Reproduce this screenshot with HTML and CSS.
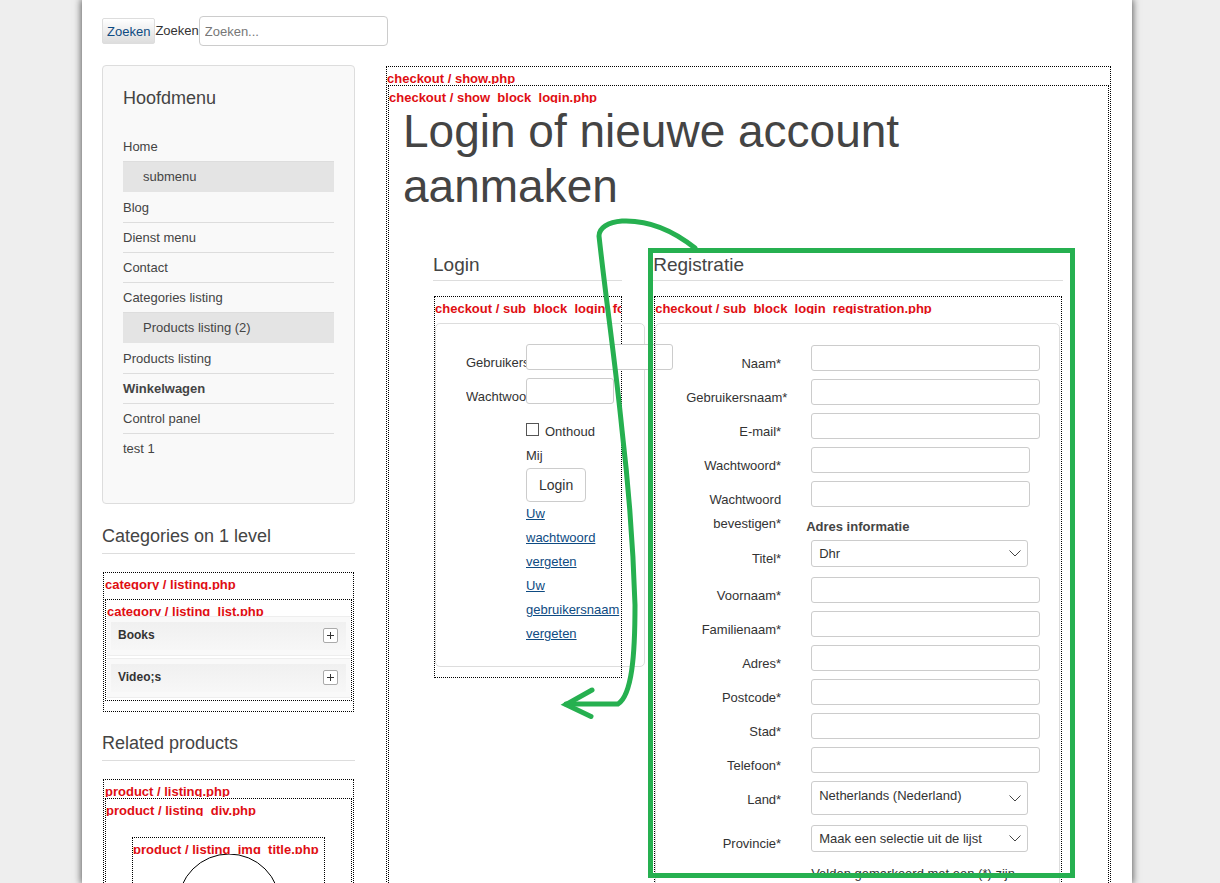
FILE: index.html
```
<!DOCTYPE html>
<html lang="nl">
<head>
  <meta charset="UTF-8">
  <meta name="viewport" content="width=device-width, initial-scale=1.0">
  <title>Login of nieuwe account aanmaken</title>
  <link rel="stylesheet" href="styles.css">
</head>
<body>
  <div class="page">
    <form class="search">
      <button type="button" class="search-button">Zoeken</button>
      <label for="search">Zoeken</label>
      <input type="text" id="search" class="search-input" placeholder="Zoeken...">
    </form>

    <div class="columns">
      <aside class="sidebar">
        <nav class="menu">
          <h3>Hoofdmenu</h3>
          <ul>
            <li class="no-line"><a href="#">Home</a></li>
            <li class="sub"><a href="#">submenu</a></li>
            <li class="no-line"><a href="#">Blog</a></li>
            <li><a href="#">Dienst menu</a></li>
            <li><a href="#">Contact</a></li>
            <li><a href="#">Categories listing</a></li>
            <li class="sub"><a href="#">Products listing (2)</a></li>
            <li class="no-line"><a href="#">Products listing</a></li>
            <li class="active"><a href="#">Winkelwagen</a></li>
            <li><a href="#">Control panel</a></li>
            <li><a href="#">test 1</a></li>
          </ul>
        </nav>

        <section class="module">
          <h3 class="module-title">Categories on 1 level</h3>
          <div class="tpl tpl-categories">
            <div class="tpl-name">category / listing.php</div>
            <div class="tpl tpl-list">
              <div class="tpl-name">category / listing_list.php</div>
              <ul class="categories">
                <li>
                  <div class="category">
                    <span>Books</span>
                    <button type="button" class="expand" aria-label="Books">
                      <svg viewBox="0 0 15 15"><path d="M4 7.5h7M7.5 4v7"/></svg>
                    </button>
                  </div>
                </li>
                <li>
                  <div class="category">
                    <span>Video;s</span>
                    <button type="button" class="expand" aria-label="Video;s">
                      <svg viewBox="0 0 15 15"><path d="M4 7.5h7M7.5 4v7"/></svg>
                    </button>
                  </div>
                </li>
              </ul>
            </div>
          </div>
        </section>

        <section class="module">
          <h3 class="module-title">Related products</h3>
          <div class="tpl tpl-products">
            <div class="tpl-name">product / listing.php</div>
            <div class="tpl tpl-div">
              <div class="tpl-name">product / listing_div.php</div>
              <div class="tpl tpl-product">
                <div class="tpl-name">product / listing_img_title.php</div>
                <svg class="product-img" viewBox="0 0 104 104"><circle cx="52" cy="51" r="51"/></svg>
              </div>
            </div>
          </div>
        </section>
      </aside>

      <main class="tpl main">
        <div class="tpl-name">checkout / show.php</div>
        <div class="tpl">
          <div class="tpl-name">checkout / show_block_login.php</div>
          <div class="checkout">
            <h1>Login of nieuwe account aanmaken</h1>
            <div class="blocks">
              <section>
                <h2>Login</h2>
                <div class="tpl tpl-form tpl-login">
                  <div class="tpl-name">checkout / sub_block_login_form.php</div>
                  <form class="panel login">
                    <div class="field">
                      <label for="login-user">Gebruikersnaam</label>
                      <div class="control"><input type="text" id="login-user" class="login-user"></div>
                    </div>
                    <div class="field">
                      <label for="login-pass">Wachtwoord</label>
                      <div class="control"><input type="password" id="login-pass"></div>
                    </div>
                    <div class="actions">
                      <div class="remember">
                        <input type="checkbox" id="remember"><label for="remember">Onthoud Mij</label>
                      </div>
                      <button type="button" class="login-button">Login</button>
                      <a href="#">Uw wachtwoord vergeten</a>
                      <a href="#">Uw gebruikersnaam vergeten</a>
                    </div>
                  </form>
                </div>
              </section>

              <section>
                <h2>Registratie</h2>
                <div class="tpl tpl-form tpl-registration">
                  <div class="tpl-name">checkout / sub_block_login_registration.php</div>
                  <form class="panel registration">
                    <div class="field">
                      <label for="name">Naam*</label>
                      <div class="control"><input type="text" id="name"></div>
                    </div>
                    <div class="field">
                      <label for="username">Gebruikersnaam*</label>
                      <div class="control"><input type="text" id="username"></div>
                    </div>
                    <div class="field">
                      <label for="email">E-mail*</label>
                      <div class="control"><input type="email" id="email"></div>
                    </div>
                    <div class="field">
                      <label for="password">Wachtwoord*</label>
                      <div class="control"><input type="password" id="password"></div>
                    </div>
                    <div class="field">
                      <label for="password2">Wachtwoord bevestigen*</label>
                      <div class="control">
                        <input type="password" id="password2">
                        <h4>Adres informatie</h4>
                      </div>
                    </div>
                    <div class="field">
                      <label for="title">Titel*</label>
                      <div class="control"><select id="title"><option>Dhr</option></select></div>
                    </div>
                    <div class="field">
                      <label for="firstname">Voornaam*</label>
                      <div class="control"><input type="text" id="firstname"></div>
                    </div>
                    <div class="field">
                      <label for="lastname">Familienaam*</label>
                      <div class="control"><input type="text" id="lastname"></div>
                    </div>
                    <div class="field">
                      <label for="street">Adres*</label>
                      <div class="control"><input type="text" id="street"></div>
                    </div>
                    <div class="field">
                      <label for="postcode">Postcode*</label>
                      <div class="control"><input type="text" id="postcode"></div>
                    </div>
                    <div class="field">
                      <label for="city">Stad*</label>
                      <div class="control"><input type="text" id="city"></div>
                    </div>
                    <div class="field">
                      <label for="phone">Telefoon*</label>
                      <div class="control"><input type="tel" id="phone"></div>
                    </div>
                    <div class="field">
                      <label for="country">Land*</label>
                      <div class="control"><select id="country" class="tall"><option>Netherlands (Nederland)</option></select></div>
                    </div>
                    <div class="field">
                      <label for="state">Provincie*</label>
                      <div class="control">
                        <select id="state"><option>Maak een selectie uit de lijst</option></select>
                        <p>Velden gemarkeerd met een (*) zijn</p>
                      </div>
                    </div>
                  </form>
                </div>
              </section>
            </div>
          </div>
        </div>
      </main>
    </div>

    <!-- Hand-drawn markup: move the registration block below the login block -->
    <svg class="markup" viewBox="0 0 1050 883">
      <rect x="568.5" y="250.5" width="422" height="625"/>
      <path d="M613 248C588 228 562 220 540 221C526 222 517 228 517 236C524 300 533 360 540 430C547 490 551 540 553 605C553 655 550 695 536 704H484"/>
      <path d="M510 690L484 704.500L509 716.500"/>
    </svg>
  </div>
</body>
</html>
```

FILE: styles.css
```
:root {
  --text: #333;
  --heading: #444;
  --line: #ddd;
  --field: #ccc;
  --link: #0e4b82;
  --tpl: #e00d12;
  --markup: #26b050;
}

* {
  box-sizing: border-box;
  margin: 0;
  padding: 0;
}

body {
  background: #eee;
  color: var(--text);
  font-family: "Liberation Sans", Arial, sans-serif;
  font-size: 13px;
  line-height: 24px;
  padding-right: 6px;
  overflow: hidden;
}

.page {
  position: relative;
  max-width: 1050px;
  height: 100vh;
  margin: 0 auto;
  padding: 16px 20px 0;
  overflow: hidden;
  background: #fff;
  box-shadow: 0 0 7px 1px rgba(0, 0, 0, 0.6);
}

ul {
  list-style: none;
}

a {
  color: var(--link);
}

h1, h2, h3 {
  color: var(--heading);
  font-weight: normal;
}

input, select, button {
  font-family: inherit;
  font-size: 13px;
  color: var(--text);
}

/* Search */

.search {
  display: flex;
  align-items: center;
  margin-bottom: 19px;
}

.search-button {
  height: 26px;
  padding: 0 4px;
  border: 1px solid var(--line);
  border-radius: 2px;
  background: linear-gradient(#fff, #ddd);
  color: var(--link);
}

.search-input {
  width: 189px;
  height: 30px;
  padding: 0 5px;
  border: 1px solid var(--field);
  border-radius: 4px;
}

.search-input::placeholder {
  color: #777;
}

/* Layout */

.columns {
  display: flex;
  gap: 31px;
}

.sidebar {
  flex: none;
  width: 253px;
}

.main {
  flex: 1;
  min-width: 0;
  margin: 1px 1px 0 0;
}

/* Template outlines */

.tpl {
  border: 1px dotted #000;
}

.tpl-name {
  height: 17px;
  margin-bottom: 1px;
  overflow: hidden;
  white-space: nowrap;
  color: var(--tpl);
  font-weight: bold;
}

.main > .tpl {
  margin: 0 1px;
}

/* Main menu */

.menu {
  padding: 20px 20px 40px;
  margin-bottom: 20px;
  border: 1px solid var(--line);
  border-radius: 4px;
  background: #f9f9f9;
}

.menu h3 {
  margin-bottom: 21px;
  font-size: 18px;
}

.menu li {
  border-top: 1px solid var(--line);
  line-height: 29px;
}

.menu .no-line {
  border-color: transparent;
}

.menu .sub {
  padding-left: 20px;
  background: #e4e4e4;
  line-height: 30px;
}

.menu .active {
  font-weight: bold;
}

.menu a {
  display: block;
  color: var(--heading);
  text-decoration: none;
}

/* Sidebar modules */

.module {
  margin-bottom: 19px;
}

.module-title {
  padding-bottom: 5px;
  margin-bottom: 18px;
  border-bottom: 1px solid var(--line);
  font-size: 18px;
}

.module > .tpl {
  margin: 0 1px;
}

.tpl-categories {
  padding: 0 1px 10px;
}

.tpl-categories > .tpl-name {
  margin-bottom: 9px;
}

.tpl-list {
  padding: 0 1px 2px;
}

.tpl-list > .tpl-name {
  height: 16px;
  margin-bottom: 0;
}

.categories li {
  padding: 5px 4px;
  border: 1px solid #eee;
  border-width: 1px 0;
  background: #f9f9f9;
}

.categories li + li {
  margin-top: 2px;
}

.category {
  display: flex;
  align-items: center;
  justify-content: space-between;
  height: 28px;
  padding: 0 8px 2px 7px;
  background: linear-gradient(#f0f0f0, #f7f7f7);
  font-size: 12px;
  font-weight: bold;
}

.expand {
  width: 15px;
  height: 15px;
  border: 1px solid #aaa;
  border-radius: 2px;
  background: #fff;
}

.expand svg {
  display: block;
  width: 15px;
  height: 15px;
  margin: -1px;
  stroke: #333;
}

.tpl-products {
  padding: 0 1px;
}

.tpl-div > .tpl-name {
  margin-bottom: 21px;
}

.tpl-product {
  margin: 0 26px;
}

.tpl-product > .tpl-name {
  height: 16px;
  margin-bottom: 0;
}

.product-img {
  display: block;
  width: 104px;
  height: 104px;
  margin: 0 auto;
  fill: #fff;
  stroke: #000;
}

/* Checkout */

.checkout {
  padding: 0 45px 60px 14px;
}

h1 {
  margin-bottom: 39px;
  font-size: 46px;
  line-height: 55px;
}

.blocks {
  display: grid;
  grid-template-columns: 6fr 13fr;
  align-items: start;
  gap: 31px;
  padding-left: 30px;
}

.blocks > section {
  min-width: 0;
}

h2 {
  padding-bottom: 3px;
  margin-bottom: 15px;
  border-bottom: 1px solid var(--line);
  font-size: 19px;
}

.tpl-form {
  margin: 0 1px;
}

.tpl-form > .tpl-name {
  margin-bottom: 9px;
}

.tpl-login {
  margin-right: 0;
  padding-bottom: 10px;
}

.tpl-registration {
  padding: 0 1px 60px 0;
}

.panel {
  border: 1px solid var(--line);
  border-radius: 5px;
}

.login {
  width: 210px;
  padding: 20px 30px;
}

.registration {
  padding: 21px 19px 20px 30px;
}

.field {
  display: flex;
}

.field > label {
  flex: none;
  width: 95px;
  margin-right: 30px;
  padding-top: 7px;
  text-align: right;
}

.control {
  flex: 1;
  min-width: 0;
}

.field input, .field select {
  display: block;
  width: 100%;
  height: 26px;
  margin-bottom: 8px;
  padding: 0 7px;
  border: 1px solid var(--field);
  border-radius: 3px;
  background-color: #fff;
}

.registration input[type="password"] {
  width: calc(100% - 10px);
}

.field select {
  appearance: none;
  width: calc(100% - 12px);
  height: 27px;
  margin-bottom: 10px;
  background: #fff url("data:image/svg+xml,%3Csvg xmlns='http://www.w3.org/2000/svg' width='12' height='7'%3E%3Cpath d='M.5.5l5.500 5.500 5.500-5.500' fill='none' stroke='%23444'/%3E%3C/svg%3E") no-repeat right 6px center;
}

.field select.tall {
  height: 34px;
  padding-bottom: 6px;
}

h4 {
  margin: 3px 0 1px -5px;
  color: var(--heading);
  font-size: 13px;
}

/* Login form */

.login .field {
  height: 34px;
}

.login .field > label {
  width: 60px;
  height: 31px;
  margin-right: 0;
  overflow: hidden;
  text-align: left;
}

.field .login-user {
  width: 147px;
}

.actions {
  margin: 8px 0 0 60px;
}

.remember input {
  appearance: none;
  width: 13px;
  height: 13px;
  margin-right: 6px;
  border: 1px solid #555;
  background: #fff;
}

.login-button {
  display: block;
  height: 34px;
  padding: 0 12px;
  border: 1px solid var(--field);
  border-radius: 4px;
  background: #fff;
  font-size: 14px;
}

.actions a {
  display: block;
}

/* Markup overlay */

.markup {
  position: absolute;
  top: 0;
  left: 0;
  width: 1050px;
  height: 883px;
  fill: none;
  stroke: var(--markup);
  stroke-width: 5px;
  stroke-linecap: round;
  pointer-events: none;
}
```
